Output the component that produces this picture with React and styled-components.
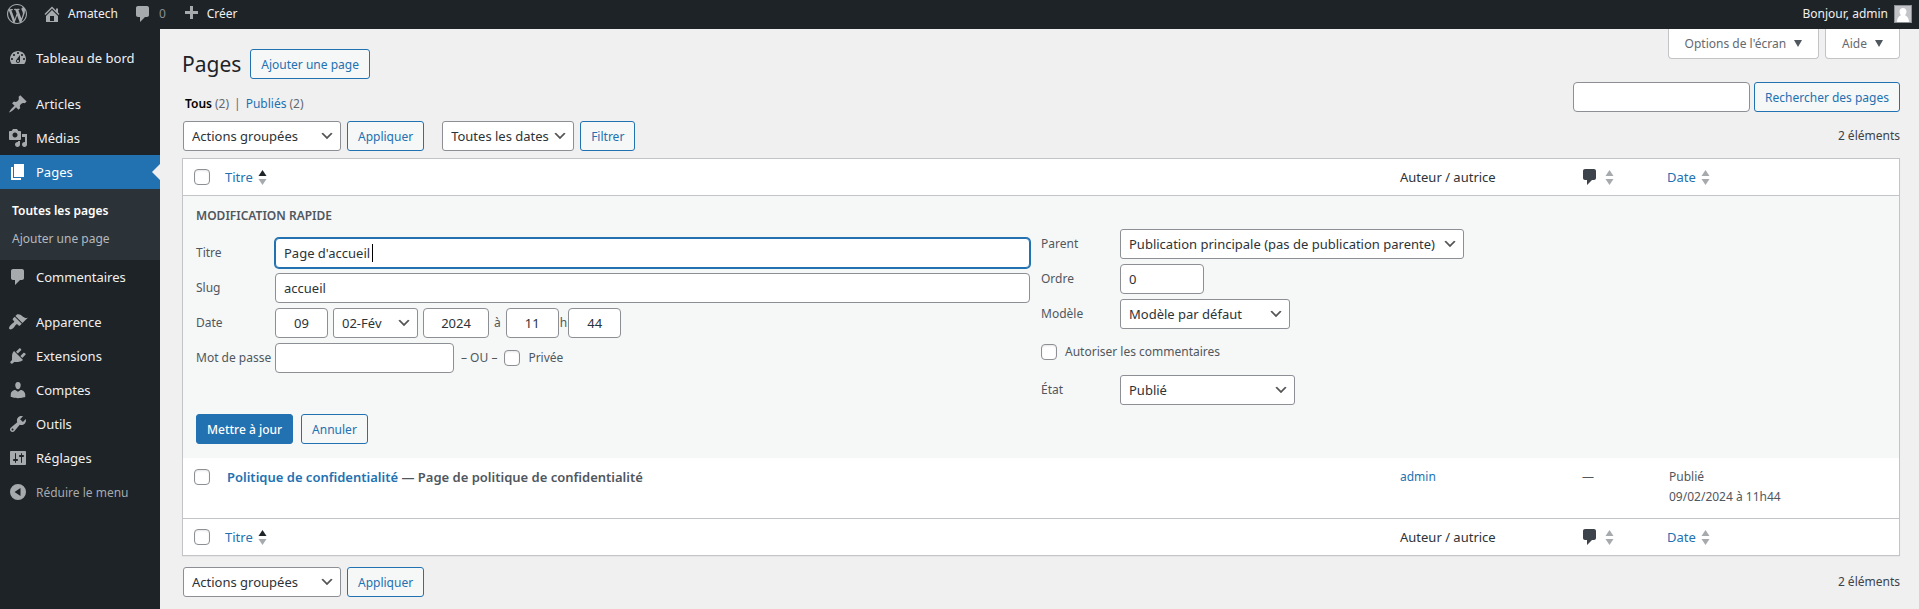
import React, { useEffect, useRef } from "react";
import styled, { createGlobalStyle, css } from "styled-components";

const ink = "#1d2327";
const blue = "#2271b1";
const line = "#c3c4c7";
const fieldLine = "#8c8f94";
const muted = "#50575e";

const GlobalStyle = createGlobalStyle`
  *, *::before, *::after { box-sizing: border-box; }
  body {
    margin: 0;
    background: #f0f0f1;
    color: #3c434a;
    font: 12px/18px "Noto Sans", "Open Sans", sans-serif;
  }
  button, input, select { font-family: inherit; margin: 0; }
  a { color: ${blue}; text-decoration: none; }
`;

/* ---------- Icons ---------- */

const ICONS = {
  wordpress:
    "M20 10c0-5.51-4.49-10-10-10C4.48 0 0 4.49 0 10c0 5.52 4.48 10 10 10 5.51 0 10-4.48 10-10zM7.78 15.37L4.37 6.22c.55-.02 1.17-.08 1.17-.08.5-.06.44-1.13-.06-1.11 0 0-1.45.11-2.37.11-.18 0-.37 0-.58-.01C4.12 2.69 6.87 1.11 10 1.11c2.33 0 4.45.87 6.05 2.34-.68-.11-1.65.39-1.65 1.58 0 .74.45 1.36.9 2.1.35.61.55 1.36.55 2.46 0 1.49-1.4 5-1.4 5l-3.03-8.37c.54-.02.82-.17.82-.17.5-.05.44-1.25-.06-1.22 0 0-1.44.12-2.38.12-.87 0-2.33-.12-2.33-.12-.5-.03-.56 1.2-.06 1.22l.92.08 1.26 3.41zM17.41 10c.24-.64.74-1.87.43-4.25.7 1.29 1.05 2.71 1.05 4.25 0 3.29-1.73 6.24-4.4 7.78.97-2.59 1.94-5.2 2.92-7.78zM6.1 18.09C3.12 16.65 1.11 13.53 1.11 10c0-1.3.23-2.48.72-3.59C3.25 10.3 4.67 14.2 6.1 18.09zm4.03-6.63l2.58 6.98c-.86.29-1.76.45-2.71.45-.79 0-1.57-.11-2.29-.33.81-2.38 1.62-4.74 2.42-7.1z",
  home: "M16 8.5l1.53 1.53-1.06 1.06L10 4.6l-6.47 6.49-1.06-1.06L10 2.5l4 4v-2h2v4zm-6-2.46l6 5.99V18H4v-5.97zM12 17v-5H8v5h4z",
  comments: "M5 2h9c1.1 0 2 .9 2 2v7c0 1.1-.9 2-2 2h-2l-5 5v-5H5c-1.1 0-2-.9-2-2V4c0-1.1.9-2 2-2z",
  plus: "M17 7v3h-5v5H9v-5H4V7h5V2h3v5h5z",
  dashboard:
    "M3.76 16h12.48c1.1-1.37 1.76-3.11 1.76-5 0-4.42-3.58-8-8-8s-8 3.58-8 8c0 1.89.66 3.63 1.76 5zM10 4c.55 0 1 .45 1 1s-.45 1-1 1-1-.45-1-1 .45-1 1-1zM6 6c.55 0 1 .45 1 1s-.45 1-1 1-1-.45-1-1 .45-1 1-1zm8 0c.55 0 1 .45 1 1s-.45 1-1 1-1-.45-1-1 .45-1 1-1zm-5.37 5.55L12 7v6c0 1.1-.9 2-2 2s-2-.9-2-2c0-.57.24-1.08.63-1.45zM4 10c.55 0 1 .45 1 1s-.45 1-1 1-1-.45-1-1 .45-1 1-1zm12 0c.55 0 1 .45 1 1s-.45 1-1 1-1-.45-1-1 .45-1 1-1zm-5 3c0-.55-.45-1-1-1s-1 .45-1 1 .45 1 1 1 1-.45 1-1z",
  post: "M10.44 3.02l1.82-1.82 6.36 6.35-1.83 1.82c-1.05-.68-2.48-.57-3.41.36l-.75.75c-.92.93-1.04 2.35-.35 3.41l-1.83 1.82-2.41-2.41-2.8 2.79c-.42.42-3.38 2.71-3.8 2.29s1.86-3.39 2.28-3.81l2.79-2.79L4.1 9.36l1.83-1.82c1.05.69 2.48.57 3.4-.36l.75-.75c.93-.92 1.05-2.35.36-3.41z",
  media:
    "M13 11V4c0-.55-.45-1-1-1h-1.67L9 1H5L3.67 3H2c-.55 0-1 .45-1 1v7c0 .55.45 1 1 1h10c.55 0 1-.45 1-1zM7 4.5c1.38 0 2.5 1.12 2.5 2.5S8.38 9.5 7 9.5 4.5 8.38 4.5 7 5.62 4.5 7 4.5zM14 6h5v10.5c0 1.38-1.12 2.5-2.5 2.5S14 17.88 14 16.5s1.12-2.5 2.5-2.5c.17 0 .34.02.5.05V9h-3V6zm-4 8.05V13h2v3.5c0 1.38-1.12 2.5-2.5 2.5S7 17.88 7 16.5 8.12 14 9.5 14c.17 0 .34.02.5.05z",
  page: "M6 15V2h10v13H6zm-1 1h8v2H3V5h2v11z",
  appearance:
    "M14.48 11.06L7.41 3.99l1.5-1.5c.5-.56 2.3-.47 3.51.32 1.21.8 1.43 1.28 2.91 2.1 1.18.64 2.45 1.26 4.45.85zm-.71.71L6.7 4.7 4.93 6.47c-.39.39-.39 1.02 0 1.41l1.06 1.06c.39.39.39 1.03 0 1.42-.6.6-1.43 1.11-2.21 1.69-.35.26-.7.53-1.01.84C1.43 14.23.4 16.08 1.4 17.07c.99 1 2.84-.03 4.18-1.36.31-.31.58-.66.85-1.02.57-.78 1.08-1.61 1.69-2.21.39-.39 1.02-.39 1.41 0l1.06 1.06c.39.39 1.02.39 1.41 0z",
  plugins:
    "M13.11 4.36L9.87 7.6 8 5.73l3.24-3.24c.35-.34 1.05-.2 1.56.32.52.51.66 1.21.31 1.55zm-8 1.77l.91-1.12 9.01 9.01-1.19.84c-.71.71-2.63 1.16-3.82 1.16H6.14L4.9 17.26c-.59.59-1.54.59-2.12 0-.59-.58-.59-1.53 0-2.12l1.24-1.24v-3.88c0-1.13.4-3.19 1.09-3.89zm7.26 3.97l3.24-3.24c.34-.35 1.04-.21 1.55.31.52.51.66 1.21.31 1.55l-3.24 3.25z",
  users:
    "M10 9.25c-2.27 0-2.73-3.44-2.73-3.44C7 4.02 7.82 2 9.97 2c2.16 0 2.98 2.02 2.71 3.81 0 0-.41 3.44-2.68 3.44zm0 2.57L12.72 10c2.39 0 4.52 2.33 4.52 4.53v2.49s-3.65 1.13-7.24 1.13c-3.65 0-7.24-1.13-7.24-1.13v-2.49c0-2.25 1.94-4.48 4.47-4.48z",
  tools:
    "M16.68 9.77c-1.34 1.34-3.3 1.67-4.95.99l-5.41 6.52c-.99.99-2.59.99-3.58 0s-.99-2.59 0-3.57l6.52-5.42c-.68-1.65-.35-3.61.99-4.95 1.28-1.28 3.12-1.62 4.72-1.06l-2.89 2.89 2.82 2.82 2.86-2.87c.53 1.58.18 3.39-1.08 4.65zM3.81 16.21c.4.39 1.04.39 1.43 0 .4-.4.4-1.04 0-1.43-.39-.4-1.03-.4-1.43 0-.39.39-.39 1.03 0 1.43z",
  settings:
    "M18 16V4c0-.55-.45-1-1-1H3c-.55 0-1 .45-1 1v12c0 .55.45 1 1 1h14c.55 0 1-.45 1-1zM8 11h1c.55 0 1 .45 1 1s-.45 1-1 1H8v1.5c0 .28-.22.5-.5.5s-.5-.22-.5-.5V13H6c-.55 0-1-.45-1-1s.45-1 1-1h1V5.5c0-.28.22-.5.5-.5s.5.22.5.5V11zm5-2h-1c-.55 0-1-.45-1-1s.45-1 1-1h1V5.5c0-.28.22-.5.5-.5s.5.22.5.5V7h1c.55 0 1 .45 1 1s-.45 1-1 1h-1v5.5c0 .28-.22.5-.5.5s-.5-.22-.5-.5V9z",
  collapse: "M10 2a8 8 0 1 0 0 16a8 8 0 1 0 0-16zM12.5 6v8l-6-4z",
};

const Glyph = styled.svg`
  display: block;
  flex: none;
  width: 20px;
  height: 20px;
  fill: ${(p) => p.$color || "#a7aaad"};
`;

function Icon({ name, color }) {
  return (
    <Glyph viewBox="0 0 20 20" $color={color} aria-hidden="true">
      <path fillRule="evenodd" d={ICONS[name]} />
    </Glyph>
  );
}

const SortGlyph = styled.svg`
  display: block;
  width: 9px;
  height: 15px;
`;

function SortMark({ active }) {
  return (
    <SortGlyph viewBox="0 0 9 15" aria-hidden="true">
      <path d="M4.5 0L8.500 6H.5z" fill={active ? ink : "#a7aaad"} />
      <path d="M.5 9h8l-4 6z" fill="#a7aaad" />
    </SortGlyph>
  );
}

const Caret = styled.svg`
  display: block;
  width: 8px;
  height: 7px;
  fill: ${muted};
`;

/* ---------- Top bar ---------- */

const TopBar = styled.header`
  display: flex;
  justify-content: space-between;
  height: 29px;
  padding: 0 7px 2px;
  background: ${ink};
`;

const BarGroup = styled.nav`
  display: flex;
  align-items: center;
  gap: 15px;
`;

const BarLink = styled.a`
  display: flex;
  align-items: center;
  gap: 6px;
  color: ${(p) => (p.$dim ? "#8c8f94" : "#f0f0f1")};
`;

const Avatar = styled.svg`
  display: block;
  width: 18px;
  height: 18px;
  border: 1px solid ${fieldLine};
  background: #c3c4c7;
`;

/* ---------- Side menu ---------- */

const Shell = styled.div`
  display: flex;
  flex-direction: column;
  min-height: 100vh;
`;

const Columns = styled.div`
  display: flex;
  flex: 1;
`;

const Side = styled.nav`
  flex: none;
  width: 160px;
  padding: 12px 0;
  background: ${ink};
`;

const MenuList = styled.ul`
  margin: 0;
  padding: 0;
  list-style: none;
`;

const MenuEntry = styled.li`
  margin-top: ${(p) => p.$space || 0}px;
`;

const menuRow = css`
  display: flex;
  align-items: center;
  gap: 8px;
  width: 100%;
  height: 34px;
  padding: 0 8px;
  font-size: 13px;
`;

const MenuLink = styled.a`
  ${menuRow}
  position: relative;
  color: ${(p) => (p.$current ? "#fff" : "#f0f0f1")};
  background: ${(p) => (p.$current ? blue : "transparent")};
  ${(p) =>
    p.$current &&
    css`
      &::after {
        content: "";
        position: absolute;
        right: 0;
        top: 9px;
        border: 8px solid transparent;
        border-right-color: #f0f0f1;
        border-left-width: 0;
      }
    `}
`;

const CollapseButton = styled.button`
  ${menuRow}
  border: 0;
  background: none;
  color: #a7aaad;
  font-size: 12px;
`;

const SubMenu = styled.ul`
  margin: 0;
  padding: 8px 12px 7px;
  list-style: none;
  background: #2c3338;
`;

const SubLink = styled.a`
  display: block;
  line-height: 28px;
  color: ${(p) => (p.$current ? "#fff" : "#b4b9be")};
  font-weight: ${(p) => (p.$current ? 600 : 400)};
`;

/* ---------- Controls ---------- */

const Button = styled.button`
  height: 30px;
  padding: 0 10px;
  border: 1px solid ${blue};
  border-radius: 3px;
  background: ${(p) => (p.$primary ? blue : "#f6f7f7")};
  color: ${(p) => (p.$primary ? "#fff" : blue)};
  font-size: 12px;
  font-weight: ${(p) => (p.$primary ? 500 : 400)};
  white-space: nowrap;
`;

const field = css`
  height: 30px;
  border: 1px solid ${fieldLine};
  border-radius: 4px;
  background-color: #fff;
  color: #2c3338;
  font-size: 13px;
`;

const Select = styled.select`
  ${field}
  appearance: none;
  width: ${(p) => p.$width}px;
  padding: 0 24px 0 8px;
  border-radius: 3px;
  background-image: url("data:image/svg+xml,%3Csvg xmlns='http://www.w3.org/2000/svg' viewBox='0 0 20 20'%3E%3Cpath d='M5 6l5 5 5-5 2 1-7 7-7-7 2-1z' fill='%23555'/%3E%3C/svg%3E");
  background-repeat: no-repeat;
  background-position: right 5px center;
  background-size: 16px 16px;
`;

const TextInput = styled.input`
  ${field}
  width: ${(p) => (p.$width ? `${p.$width}px` : "100%")};
  padding: 0 8px;
  text-align: ${(p) => (p.$centered ? "center" : "left")};
  &:focus {
    border-color: ${blue};
    box-shadow: 0 0 0 1px ${blue};
    outline: none;
  }
`;

const CaretField = styled.div`
  position: relative;
  input {
    display: block;
    caret-color: transparent;
  }
  &:focus-within::after {
    content: "";
    position: absolute;
    left: 97px;
    top: 6px;
    width: 1px;
    height: 18px;
    background: #000;
  }
`;

const Checkbox = styled.input.attrs({ type: "checkbox" })`
  appearance: none;
  display: block;
  flex: none;
  width: 16px;
  height: 16px;
  border: 1px solid ${fieldLine};
  border-radius: 4px;
  background: #fff;
  box-shadow: inset 0 1px 2px rgba(0, 0, 0, 0.1);
`;

/* ---------- Main area ---------- */

const Main = styled.main`
  flex: 1;
  min-width: 0;
  padding: 0 19px 12px 22px;
`;

const HeadRow = styled.div`
  display: flex;
  justify-content: space-between;
  align-items: flex-start;
`;

const TitleGroup = styled.div`
  display: flex;
  align-items: center;
  gap: 9px;
  padding-top: 20px;
`;

const PageTitle = styled.h1`
  margin: 0;
  color: ${ink};
  font-size: 21px;
  font-weight: 400;
  line-height: 30px;
`;

const MetaTabs = styled.div`
  display: flex;
  gap: 6px;
`;

const MetaTab = styled.button`
  display: flex;
  align-items: center;
  gap: 8px;
  height: 30px;
  padding: 0 16px;
  border: 1px solid ${line};
  border-top: 0;
  border-radius: 0 0 4px 4px;
  background: #fff;
  color: #646970;
  font-size: 12px;
`;

const FilterRow = styled.div`
  display: flex;
  justify-content: space-between;
  align-items: flex-end;
  margin-top: 3px;
`;

const StatusList = styled.ul`
  display: flex;
  gap: 5px;
  margin: 0;
  padding: 0 3px;
  list-style: none;
  line-height: 16px;
  color: #646970;
`;

const StatusLink = styled.a`
  margin-right: 3px;
  color: ${(p) => (p.$current ? "#000" : blue)};
  font-weight: ${(p) => (p.$current ? 600 : 400)};
`;

const SearchForm = styled.form`
  display: flex;
  gap: 4px;
`;

const TableNav = styled.div`
  display: flex;
  align-items: center;
  gap: 18px;
  padding-left: 1px;
  margin-top: ${(p) => p.$top}px;
`;

const Actions = styled.div`
  display: flex;
  gap: 6px;
`;

const Count = styled.span`
  margin-left: auto;
`;

/* ---------- Table ---------- */

const Table = styled.table`
  width: 100%;
  margin-top: 7px;
  table-layout: fixed;
  border: 1px solid ${line};
  border-spacing: 0;
  background: #fff;
  box-shadow: 0 1px 1px rgba(0, 0, 0, 0.04);
`;

const Col = styled.col`
  width: ${(p) => (p.$width ? `${p.$width}px` : "auto")};
`;

const HeadCell = styled.th`
  height: 37px;
  padding: 0 0 0 ${(p) => p.$inset || 8}px;
  border-${(p) => (p.$foot ? "top" : "bottom")}: 1px solid ${line};
  color: #2c3338;
  font-size: 13px;
  font-weight: 400;
  text-align: left;
`;

const SortLink = styled.a`
  display: flex;
  align-items: center;
  gap: 5px;
`;

const Cell = styled.td`
  height: 60px;
  padding: ${(p) => (p.$check ? "11px 0 0 11px" : "9px 10px 0")};
  vertical-align: top;
  color: ${muted};
  line-height: 20px;
`;

const RowTitle = styled.strong`
  font-size: 13px;
  font-weight: 600;
`;

function HeadCells({ foot }) {
  return (
    <tr>
      <HeadCell $foot={foot} $inset={11} as="td">
        <Checkbox aria-label="Tout sélectionner" />
      </HeadCell>
      <HeadCell $foot={foot} scope="col">
        <SortLink href="#titre">
          Titre <SortMark active />
        </SortLink>
      </HeadCell>
      <HeadCell $foot={foot} $inset={10} scope="col">
        Auteur / autrice
      </HeadCell>
      <HeadCell $foot={foot} scope="col">
        <SortLink href="#commentaires" aria-label="Commentaires">
          <Icon name="comments" color="#3c434a" />
          <SortMark />
        </SortLink>
      </HeadCell>
      <HeadCell $foot={foot} scope="col">
        <SortLink href="#date">
          Date <SortMark />
        </SortLink>
      </HeadCell>
    </tr>
  );
}

/* ---------- Quick edit ---------- */

const QuickCell = styled.td`
  padding: 10px 0 14px;
  background: #f6f7f7;
  color: ${muted};
`;

const QuickGrid = styled.div`
  display: grid;
  grid-template-columns: 1fr 1fr;
`;

const QuickColumn = styled.div`
  display: flex;
  flex-direction: column;
  gap: 5px;
  padding: ${(p) => (p.$right ? "23px 13px 0 0" : "0 11px 0 13px")};
`;

const QuickTitle = styled.h2`
  margin: 0 0 7px;
  font-size: 12px;
  font-weight: 600;
  line-height: 20px;
  text-transform: uppercase;
`;

const FieldRow = styled.div`
  display: grid;
  grid-template-columns: 79px 1fr;
  align-items: center;
  min-height: 30px;
`;

const FieldLabel = styled.label`
  white-space: nowrap;
`;

const Inline = styled.div`
  display: flex;
  align-items: center;
  gap: ${(p) => p.$gap}px;
`;

const CheckLabel = styled.label`
  display: flex;
  align-items: center;
  gap: 8px;
  height: ${(p) => p.$height || 30}px;
`;

const QuickActions = styled.div`
  display: flex;
  gap: 8px;
  padding: 9px 13px 0;
`;

function QuickEdit() {
  const title = useRef(null);
  useEffect(() => {
    const input = title.current;
    input.focus();
    input.setSelectionRange(input.value.length, input.value.length);
  }, []);

  return (
    <tr>
      <QuickCell colSpan={5}>
        <QuickGrid>
          <QuickColumn>
            <QuickTitle>Modification rapide</QuickTitle>
            <FieldRow>
              <FieldLabel htmlFor="qe-title">Titre</FieldLabel>
              <CaretField>
                <TextInput id="qe-title" ref={title} defaultValue="Page d'accueil" />
              </CaretField>
            </FieldRow>
            <FieldRow>
              <FieldLabel htmlFor="qe-slug">Slug</FieldLabel>
              <TextInput id="qe-slug" defaultValue="accueil" />
            </FieldRow>
            <FieldRow>
              <FieldLabel htmlFor="qe-day">Date</FieldLabel>
              <Inline $gap={5}>
                <TextInput id="qe-day" $width={53} $centered defaultValue="09" />
                <Select $width={85} aria-label="Mois">
                  <option>02-Fév</option>
                </Select>
                <TextInput $width={66} $centered aria-label="Année" defaultValue="2024" />
                <span>à</span>
                <Inline $gap={1}>
                  <TextInput $width={53} $centered aria-label="Heure" defaultValue="11" />
                  <span>h</span>
                  <TextInput $width={53} $centered aria-label="Minute" defaultValue="44" />
                </Inline>
              </Inline>
            </FieldRow>
            <FieldRow>
              <FieldLabel htmlFor="qe-password">Mot de passe</FieldLabel>
              <Inline $gap={7}>
                <TextInput id="qe-password" $width={179} />
                <span>– OU –</span>
                <CheckLabel>
                  <Checkbox /> Privée
                </CheckLabel>
              </Inline>
            </FieldRow>
          </QuickColumn>
          <QuickColumn $right>
            <FieldRow>
              <FieldLabel htmlFor="qe-parent">Parent</FieldLabel>
              <Select id="qe-parent" $width={344}>
                <option>Publication principale (pas de publication parente)</option>
              </Select>
            </FieldRow>
            <FieldRow>
              <FieldLabel htmlFor="qe-order">Ordre</FieldLabel>
              <TextInput id="qe-order" $width={84} defaultValue="0" />
            </FieldRow>
            <FieldRow>
              <FieldLabel htmlFor="qe-template">Modèle</FieldLabel>
              <Select id="qe-template" $width={170}>
                <option>Modèle par défaut</option>
              </Select>
            </FieldRow>
            <CheckLabel $height={36}>
              <Checkbox /> Autoriser les commentaires
            </CheckLabel>
            <FieldRow>
              <FieldLabel htmlFor="qe-status">État</FieldLabel>
              <Select id="qe-status" $width={175}>
                <option>Publié</option>
              </Select>
            </FieldRow>
          </QuickColumn>
        </QuickGrid>
        <QuickActions>
          <Button type="button" $primary>
            Mettre à jour
          </Button>
          <Button type="button">Annuler</Button>
        </QuickActions>
      </QuickCell>
    </tr>
  );
}

const MENU = [
  { label: "Tableau de bord", icon: "dashboard" },
  { label: "Articles", icon: "post", space: 12 },
  { label: "Médias", icon: "media" },
  { label: "Pages", icon: "page", current: true, children: ["Toutes les pages", "Ajouter une page"] },
  { label: "Commentaires", icon: "comments" },
  { label: "Apparence", icon: "appearance", space: 11 },
  { label: "Extensions", icon: "plugins" },
  { label: "Comptes", icon: "users" },
  { label: "Outils", icon: "tools" },
  { label: "Réglages", icon: "settings" },
];

function BulkActions() {
  return (
    <Actions>
      <Select $width={158} aria-label="Actions groupées">
        <option>Actions groupées</option>
      </Select>
      <Button type="button">Appliquer</Button>
    </Actions>
  );
}

function DownCaret() {
  return (
    <Caret viewBox="0 0 8 7" aria-hidden="true">
      <path d="M0 0h8L4 7z" />
    </Caret>
  );
}

export default function App() {
  return (
    <Shell>
      <GlobalStyle />
      <TopBar>
        <BarGroup aria-label="Barre d'outils">
          <BarLink href="#wp" aria-label="À propos de WordPress">
            <Icon name="wordpress" />
          </BarLink>
          <BarLink href="#site">
            <Icon name="home" /> Amatech
          </BarLink>
          <BarLink href="#commentaires" $dim>
            <Icon name="comments" /> 0
          </BarLink>
          <BarLink href="#creer">
            <Icon name="plus" /> Créer
          </BarLink>
        </BarGroup>
        <BarLink href="#profil">
          Bonjour, admin
          <Avatar viewBox="0 0 16 16" aria-hidden="true">
            <path fill="#fff" d="M8 2c2 0 3.500 1.500 3.500 3.700 0 1.500-.8 2.800-1.600 3.500 2 .8 4.100 2.800 4.100 6.800H2c0-4 2.100-6 4.100-6.800C5.300 8.500 4.500 7.200 4.500 5.700 4.500 3.500 6 2 8 2z" />
          </Avatar>
        </BarLink>
      </TopBar>
      <Columns>
        <Side aria-label="Menu principal">
          <MenuList>
            {MENU.map((m) => (
              <MenuEntry key={m.label} $space={m.space}>
                <MenuLink href="#menu" $current={m.current}>
                  <Icon name={m.icon} color={m.current ? "#fff" : undefined} />
                  {m.label}
                </MenuLink>
                {m.children && (
                  <SubMenu>
                    {m.children.map((c, i) => (
                      <li key={c}>
                        <SubLink href="#menu" $current={i === 0}>
                          {c}
                        </SubLink>
                      </li>
                    ))}
                  </SubMenu>
                )}
              </MenuEntry>
            ))}
          </MenuList>
          <CollapseButton type="button">
            <Icon name="collapse" /> Réduire le menu
          </CollapseButton>
        </Side>
        <Main>
          <HeadRow>
            <TitleGroup>
              <PageTitle>Pages</PageTitle>
              <Button type="button">Ajouter une page</Button>
            </TitleGroup>
            <MetaTabs>
              <MetaTab type="button">
                Options de l'écran <DownCaret />
              </MetaTab>
              <MetaTab type="button">
                Aide <DownCaret />
              </MetaTab>
            </MetaTabs>
          </HeadRow>
          <FilterRow>
            <StatusList>
              <li>
                <StatusLink href="#tous" $current>
                  Tous
                </StatusLink>
                (2)
              </li>
              <li>|</li>
              <li>
                <StatusLink href="#publies">Publiés</StatusLink>
                (2)
              </li>
            </StatusList>
            <SearchForm>
              <TextInput type="search" $width={177} aria-label="Rechercher des pages" />
              <Button type="button">Rechercher des pages</Button>
            </SearchForm>
          </FilterRow>
          <TableNav $top={9}>
            <BulkActions />
            <Actions>
              <Select $width={132} aria-label="Filtrer par date">
                <option>Toutes les dates</option>
              </Select>
              <Button type="button">Filtrer</Button>
            </Actions>
            <Count>2 éléments</Count>
          </TableNav>
          <Table>
            <colgroup>
              <Col $width={34} />
              <Col />
              <Col $width={182} />
              <Col $width={87} />
              <Col $width={240} />
            </colgroup>
            <thead>
              <HeadCells />
            </thead>
            <tbody>
              <QuickEdit />
              <tr>
                <Cell $check>
                  <Checkbox aria-label="Sélectionner Politique de confidentialité" />
                </Cell>
                <Cell>
                  <RowTitle>
                    <a href="#politique">Politique de confidentialité</a> — Page de politique de confidentialité
                  </RowTitle>
                </Cell>
                <Cell>
                  <a href="#admin">admin</a>
                </Cell>
                <Cell>—</Cell>
                <Cell>
                  Publié
                  <br />
                  09/02/2024 à 11h44
                </Cell>
              </tr>
            </tbody>
            <tfoot>
              <HeadCells foot />
            </tfoot>
          </Table>
          <TableNav $top={11}>
            <BulkActions />
            <Count>2 éléments</Count>
          </TableNav>
        </Main>
      </Columns>
    </Shell>
  );
}
